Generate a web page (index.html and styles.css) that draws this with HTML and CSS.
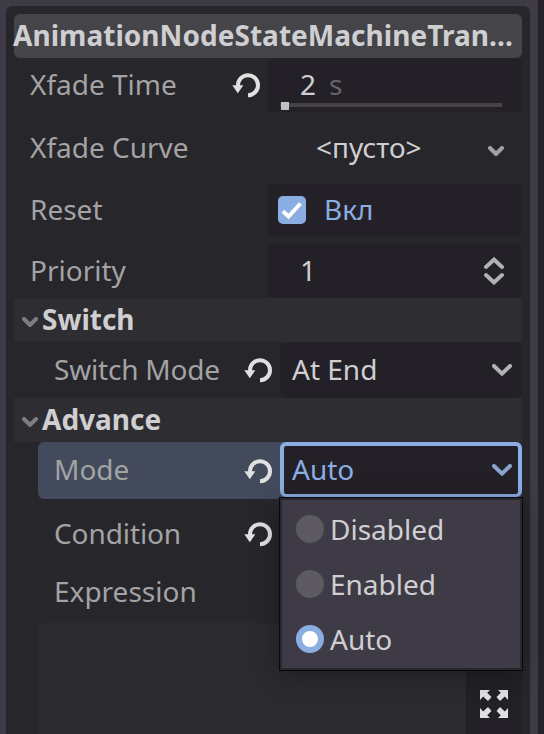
FILE: index.html
```html
<!DOCTYPE html>
<html lang="ru">
<head>
<meta charset="utf-8">
<title>Inspector</title>
<link rel="stylesheet" href="styles.css">
</head>
<body>
<svg width="0" height="0" class="defs">
  <symbol id="revert" viewBox="0 0 28 26"><path d="M6 14 V13.2 A10 10 0 1 1 16 23.2" fill="none" stroke="currentColor" stroke-width="4"/><path d="M.3 13.2H11.3L5.8 21.3Z" fill="currentColor"/></symbol>
  <symbol id="chevron" viewBox="0 0 20 12"><path d="M2 2L10 9.6L18 2" fill="none" stroke="currentColor" stroke-width="4" stroke-linecap="round"/></symbol>
  <symbol id="fold" viewBox="0 0 16 10"><path d="M2 2L8 8L14 2" fill="none" stroke="currentColor" stroke-width="4" stroke-linecap="round"/></symbol>
</svg>
<main class="dock">
  <section class="panel">
    <h1 class="title">AnimationNodeStateMachineTran...</h1>

    <div class="row time">
      <label>Xfade Time</label>
      <svg class="revert"><use href="#revert"/></svg>
      <div class="field spin"><span>2</span><span class="unit">s</span><div class="slider"><i></i></div></div>
    </div>

    <div class="row curve">
      <label>Xfade Curve</label>
      <div class="field resource"><span>&lt;пусто&gt;</span><svg class="fold"><use href="#fold"/></svg></div>
    </div>

    <div class="row reset">
      <label>Reset</label>
      <div class="field check">
        <svg class="box" viewBox="0 0 28 28"><rect width="28" height="28" rx="5" fill="#8aade2"/><path d="M5 15.3L10.5 20.5L22.5 7.5" fill="none" stroke="#fff" stroke-width="4"/></svg>
        <span>Вкл</span>
      </div>
    </div>

    <div class="row priority">
      <label>Priority</label>
      <div class="field spin"><span>1</span>
        <svg class="updown" viewBox="0 0 20 28"><path d="M2 10L10 2.6L18 10M2 18L10 25.4L18 18" fill="none" stroke="currentColor" stroke-width="4" stroke-linecap="round"/></svg>
      </div>
    </div>

    <h2 class="section"><svg class="fold"><use href="#fold"/></svg><span>Switch</span></h2>
    <div class="row sub switch">
      <label>Switch Mode</label>
      <svg class="revert"><use href="#revert"/></svg>
      <div class="field option"><span>At End</span><svg class="chevron"><use href="#chevron"/></svg></div>
    </div>

    <h2 class="section"><svg class="fold"><use href="#fold"/></svg><span>Advance</span></h2>
    <div class="row sub mode">
      <label>Mode</label>
      <svg class="revert"><use href="#revert"/></svg>
      <div class="field option focused"><span>Auto</span><svg class="chevron"><use href="#chevron"/></svg></div>
      <ul class="menu">
        <li><i class="radio"></i>Disabled</li>
        <li><i class="radio"></i>Enabled</li>
        <li><i class="radio on"></i>Auto</li>
      </ul>
    </div>

    <div class="row sub condition">
      <label>Condition</label>
      <svg class="revert"><use href="#revert"/></svg>
      <div class="field"></div>
    </div>
    <div class="row sub expression"><label>Expression</label></div>
    <div class="editor">
      <div class="code"></div>
      <div class="expand">
        <svg viewBox="0 0 28 28"><g fill="currentColor"><path id="corner" d="M0 0H10L7.2 2.8L11.5 7.1L8 11L3.2 6.5L0 10Z"/><use href="#corner" transform="matrix(-1 0 0 1 28 0)"/><use href="#corner" transform="matrix(1 0 0 -1 0 28)"/><use href="#corner" transform="matrix(-1 0 0 -1 28 28)"/></g></svg>
      </div>
    </div>
  </section>
</main>
</body>
</html>
```
FILE: styles.css
```css
* { box-sizing: border-box; }
body {
  margin: 0;
  height: 734px;
  overflow: hidden;
  background: #252329;
  color: #cfcfd1;
  font: 28px/38px "Noto Sans", sans-serif;
}
svg { display: block; flex: none; }
.defs { display: none; }
.dock { width: 538px; height: 734px; padding: 6px 8px 0 6px; background: #3e3b46; }
.panel {
  height: 728px;
  padding: 8px 8px 0;
  border-radius: 6px 6px 0 0;
  background: #27262b;
  display: flex;
  flex-direction: column;
}
.title {
  flex: none;
  margin: 0;
  height: 44px;
  border-radius: 6px;
  background: #454449;
  font-size: 28px;
  line-height: 43px;
  letter-spacing: .04px;
  white-space: nowrap;
  text-indent: -1px;
}
.row { display: flex; flex: none; align-items: center; padding-left: 16px; }
.row label { flex: 1; padding-bottom: 2px; color: #a3a3a4; }
.field span, .section span { padding-bottom: 2px; }
.revert { width: 28px; height: 26px; margin-right: 8px; color: #e0e0e0; }
.field {
  position: relative;
  width: 254px;
  height: 100%;
  border-radius: 6px;
  background: #232127;
  display: flex;
  align-items: center;
}
.time { height: 54px; }
.spin { padding-left: 32px; }
.unit { margin-left: 13px; color: #65646a; }
.slider {
  position: absolute;
  left: 12px;
  bottom: 5px;
  width: 222px;
  height: 4px;
  background: #454348;
}
.slider i { position: absolute; left: 1px; top: -1px; width: 8px; height: 8px; background: #c0bfc1; }
.curve { height: 72px; }
.resource { background: none; padding: 0 18px 0 48px; justify-content: space-between; }
.fold { width: 16px; height: 10px; color: #a2a2a4; }
.resource .fold { margin-top: 6px; }
.reset { height: 52px; margin-bottom: 8px; }
.check { padding-left: 10px; gap: 18px; color: #8aade2; }
.box { width: 28px; height: 28px; }
.priority { height: 54px; }
.updown { width: 20px; height: 28px; margin: 0 18px 0 auto; color: #b2b2b3; }
.section {
  flex: none;
  display: flex;
  align-items: center;
  gap: 4px;
  margin: 0;
  height: 44px;
  padding-left: 8px;
  background: #2e2d32;
  font-size: 28px;
  line-height: 38px;
}
.section .fold { margin-top: 3px; color: #7e7d82; }
.sub { position: relative; margin-left: 24px; }
.sub .field { width: 242px; }
.switch { height: 56px; }
.switch label { letter-spacing: -.2px; }
.condition label { letter-spacing: -.1px; }
.option { padding: 0 10px 0 12px; justify-content: space-between; }
.chevron { width: 20px; height: 12px; color: #b2b2b3; }
.mode { height: 57px; border-radius: 6px; background: #424a5c; }
.mode label { padding-bottom: 4px; }
.focused {
  height: 55px;
  align-self: flex-start;
  padding: 0 6px 0 8px;
  border: 4px solid #8aade2;
  border-bottom-width: 3px;
  color: #8aade2;
}
.focused .chevron { color: #8aa4cc; }
.menu {
  position: absolute;
  z-index: 1;
  right: -1px;
  top: 55px;
  width: 244px;
  height: 174px;
  margin: 0;
  padding: 3px 0 0 16px;
  list-style: none;
  border: 1px solid #09090b;
  background: #3e3b46;
  box-shadow: inset 0 0 0 2px #29272e, 0 4px 24px rgba(0, 0, 0, .3);
}
.menu li { display: flex; align-items: center; gap: 6px; height: 55px; }
.radio { width: 28px; height: 28px; border-radius: 50%; background: #5c5963; }
.radio.on { border: 6px solid #8aade2; background: #fff; }
.condition { height: 54px; margin-top: 8px; }
.expression { height: 62px; }
.editor { flex: 1; margin-left: 24px; display: flex; }
.code { flex: 1; background: #2b2a2f; border-radius: 6px 0 0; }
.expand { width: 56px; background: #232127; padding: 67px 0 0 14px; color: #e0e0e0; }
.expand svg { width: 28px; height: 28px; }
```
